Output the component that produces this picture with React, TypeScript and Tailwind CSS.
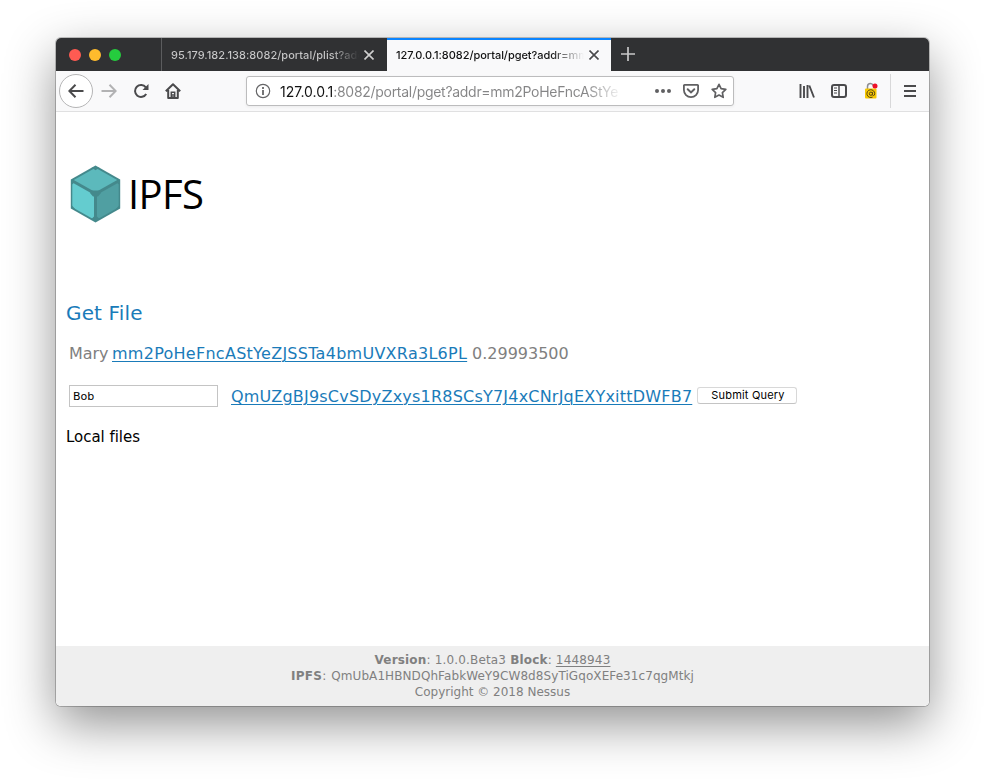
import type { ReactNode } from 'react';

function Icon({ children, className = '' }: { children: ReactNode; className?: string }) {
  return (
    <svg viewBox="0 0 16 16" className={`h-4 w-4 shrink-0 ${className}`} fill="none" stroke="#4a4a4c" strokeWidth="2">
      {children}
    </svg>
  );
}

function TabBar() {
  return (
    <div className="flex h-[33px] bg-[#303133] text-[11px] font-medium">
      <div className="flex w-[106px] items-center gap-2 border-r border-[#5b5c5e] pl-[13px]">
        <span className="h-3 w-3 rounded-full bg-[#ff5b52]" />
        <span className="h-3 w-3 rounded-full bg-[#ffbb2d]" />
        <span className="h-3 w-3 rounded-full bg-[#25cc3e]" />
      </div>
      <div className="flex w-[225px] items-center pt-px pl-[9px]">
        <div className="w-[188px] overflow-hidden whitespace-nowrap bg-gradient-to-r from-[#c8c8c9] from-85% to-transparent bg-clip-text leading-5 tracking-[0.03px] text-transparent">
          95.179.182.138:8082/portal/plist?addr
        </div>
        <svg viewBox="0 0 10 10" className="ml-[5px] h-[10px] w-[10px]" stroke="#cfcfcf" strokeWidth="1.6">
          <path d="M.5.5l9 9M9.500.5l-9 9" />
        </svg>
      </div>
      <div className="flex w-[224px] items-center border-t-2 border-[#0a84ff] bg-[#f9f9fa] pl-[9px]">
        <div className="-mt-[2px] w-[188px] overflow-hidden whitespace-nowrap bg-gradient-to-r from-[#111] from-82% to-transparent bg-clip-text leading-5 tracking-[-0.04px] text-transparent">
          127.0.0.1:8082/portal/pget?addr=mm2
        </div>
        <svg viewBox="0 0 10 10" className="-mt-px ml-[5px] h-[10px] w-[10px]" stroke="#4a4a4c" strokeWidth="1.6">
          <path d="M.5.5l9 9M9.500.5l-9 9" />
        </svg>
      </div>
      <svg viewBox="0 0 14 14" className="mt-[9px] ml-[10px] h-[14px] w-[14px]" stroke="#c8c8c9" strokeWidth="1.7">
        <path d="M7 0v14M0 7h14" />
      </svg>
    </div>
  );
}

function Toolbar() {
  return (
    <div className="flex h-[41px] items-center border-b border-[#e0e0e1] bg-[#f9f9fa]">
      <div className="ml-[3px] flex h-[34px] w-[34px] items-center justify-center rounded-full border border-[#b5b5b6] bg-white">
        <Icon>
          <path d="M15.500 8H1.500M7.500 1.800L1.300 8l6.200 6.200" />
        </Icon>
      </div>
      <Icon className="ml-2 opacity-40">
        <path d="M.5 8h14M8.500 1.800L14.700 8l-6.200 6.200" />
      </Icon>
      <Icon className="ml-4">
        <path d="M13.200 11A6 6 0 1 1 12.800 4.300" />
        <path d="M15.500 1v6h-6z" fill="#4a4a4c" stroke="none" />
      </Icon>
      <Icon className="ml-4">
        <path d="M.8 8.300L8 1.200l7.200 7.100M3.200 7v8h9.600V7" strokeLinejoin="round" />
        <path d="M6.300 15V9.200h3.400V15" strokeWidth="1.500" />
        <path d="M8 11v3" strokeWidth="1.500" />
      </Icon>
      <div className="ml-[65px] flex h-[30px] w-[488px] items-center rounded-[3px] border border-[#bcbcbd] bg-white pl-2 shadow-[0_1px_3px_rgba(0,0,0,0.06)]">
        <svg viewBox="0 0 16 16" className="h-4 w-4 shrink-0" fill="none" stroke="#666668">
          <circle cx="8" cy="8" r="6.700" strokeWidth="1.200" />
          <path d="M8 7v5M8 4v2" strokeWidth="1.800" />
        </svg>
        <div className="mt-[2px] ml-[9px] w-[344px] overflow-hidden whitespace-nowrap bg-[linear-gradient(to_right,#111_54px,#858586_54px,#858586_305px,transparent_343px)] bg-clip-text text-[14px] leading-5 text-transparent">
          127.0.0.1<span className="tracking-[-0.29px]">:8082/portal/pget?addr=mm2PoHeFncAStYe</span>
        </div>
        <svg viewBox="0 0 16 4" className="ml-[31px] h-1 w-4 shrink-0" fill="#606062">
          <circle cx="2" cy="2" r="2" />
          <circle cx="8" cy="2" r="2" />
          <circle cx="14" cy="2" r="2" />
        </svg>
        <Icon className="ml-3">
          <path d="M1.500 1.900h13a.6.6 0 0 1 .6.6v4.500a7.100 7.100 0 0 1-14.200 0V2.500a.6.6 0 0 1 .6-.6z" stroke="#606062" strokeWidth="1.800" />
          <path d="M4.700 6.200L8 9.400l3.300-3.200" stroke="#606062" strokeLinecap="round" />
        </Icon>
        <Icon className="ml-3">
          <path d="M8 1.300l2.100 4.300 4.700.7-3.400 3.300.8 4.700L8 12.100l-4.200 2.200.8-4.700L1.200 6.300l4.700-.7z" stroke="#606062" strokeWidth="1.700" strokeLinejoin="round" />
        </Icon>
      </div>
      <Icon className="ml-[65px]">
        <path d="M1.500 1v14M5 3v12M8.500 2v13M10.300 2.500l4.700 12" strokeWidth="1.900" />
      </Icon>
      <Icon className="ml-4">
        <rect x="1" y="2" width="14" height="12" rx="2" />
        <path d="M8 2v12" strokeWidth="1.500" />
        <path d="M3 5h3M3 7.500h3M3 10h3" strokeWidth="1" />
      </Icon>
      <svg viewBox="0 0 16 18" className="ml-4 h-[18px] w-4 shrink-0" fill="none">
        <path d="M4.500 8V4.500Q4.500 1.500 7.500 1.500Q9.500 1.500 10 3.500" stroke="#8d8d90" strokeWidth="1.500" />
        <rect x="2" y="6.500" width="11.500" height="10" rx="1" fill="#f7c800" />
        <path d="M9.600 15.100A3.900 3.900 0 1 1 11.700 11.700Q11.700 13.500 10.500 13.500Q9.500 13.500 9.500 12.500V10.200" stroke="#5b4810" strokeWidth="1" />
        <circle cx="7.900" cy="11.700" r="1.600" stroke="#5b4810" strokeWidth="1" />
        <circle cx="12" cy="4" r="2.500" fill="#ee1028" />
      </svg>
      <div className="ml-[11px] h-[34px] w-px bg-[#d8d8d9]" />
      <svg viewBox="0 0 12 12" className="ml-[13px] h-3 w-3" stroke="#4a4a4c" strokeWidth="2">
        <path d="M0 1h12M0 6h12M0 11h12" />
      </svg>
    </div>
  );
}

function Logo() {
  return (
    <div className="flex h-[58px] items-center">
      <svg viewBox="0 0 52 58" className="h-[58px] w-[52px]">
        <path d="M26.500.5L51.200 14.600v28.800L26.500 57.500 1.800 43.400V14.600z" fill="#44898c" />
        <path d="M26.500 2.800L48.200 15.100 26.500 27.200 4.800 15.100z" fill="#5cb9bc" />
        <path d="M3.300 17.600L25 29.700v24.700L3.300 42.200z" fill="#64cccf" />
        <path d="M49.700 17.600L28 29.700v24.700L49.700 42.200z" fill="#509fa2" />
        <path d="M22.500 2.600h8l-4 2.600zM23 25.500h7l2 2.500-3 3.500h-5L21 28zM2 39.500l5 5.500L2 43zM51 39.500l-5 5.500 5-2zM22.500 54l2.500-2.400h3l2.500 2.400-4 2.500zM2 15l4.500 1.500L3 19.500zM51 15l-4.500 1.500 3.500 3z" fill="#44898c" />
      </svg>
      <span className="ml-[7px] font-['Open_Sans',sans-serif] text-[40px] leading-[58px] tracking-[-0.6px] text-black">IPFS</span>
    </div>
  );
}

export default function App() {
  return (
    <div className="h-[780px] w-[985px] overflow-hidden bg-white pt-[38px] pl-[56px] font-[Inter,sans-serif]">
      <div className="h-[668px] w-[873px] rounded-[5px] shadow-[0_0_0_1px_rgba(0,0,0,0.22),0_18px_50px_rgba(0,0,0,0.43)]">
        <div className="flex h-full flex-col overflow-hidden rounded-[5px] bg-white">
          <TabBar />
          <Toolbar />
          <main className="flex-1 pt-[53px] pl-[10px] font-[Verdana,'DejaVu_Sans',sans-serif]">
            <div className="pl-[3px]">
              <Logo />
            </div>
            <h1 className="mt-[76px] text-[20px] leading-7 tracking-[0.15px] text-[#1a7bb9]">Get File</h1>
            <div className="mt-[15px] flex pl-[3px] text-[16px] leading-6 whitespace-nowrap text-[#808080]">
              <span className="w-[43px] tracking-[-0.1px]">Mary</span>
              <a className="w-[355px] tracking-[0.27px] text-[#1a7bb9] underline decoration-1 underline-offset-2">mm2PoHeFncAStYeZJSSTa4bmUVXRa3L6PL</a>
              <span className="ml-[5px]">0.29993500</span>
            </div>
            <div className="mt-[17px] flex items-center pl-[3px] whitespace-nowrap">
              <input className="h-[22px] w-[149px] border border-[#c4c4c4] bg-white px-[3px] text-[11px] text-black" defaultValue="Bob" />
              <a className="mt-[2px] ml-[13px] w-[461px] text-[16px] leading-6 tracking-[0.21px] text-[#1a7bb9] underline decoration-1 underline-offset-2">QmUZgBJ9sCvSDyZxys1R8SCsY7J4xCNrJqEXYxittDWFB7</a>
              <button className="-mt-px ml-[5px] h-[17px] w-[100px] rounded-[3px] border border-[#d8d8d8] border-b-[#c4c4c4] bg-white pl-[2px] font-[Inter,sans-serif] text-[11px] leading-[13px] tracking-[0.2px] text-black">Submit Query</button>
            </div>
            <p className="mt-[16px] text-[15px] leading-6 tracking-[-0.03px] text-black">Local files</p>
          </main>
          <footer className="h-[60px] bg-[#efefef] pt-[6px] text-center font-[Verdana,'DejaVu_Sans',sans-serif] text-[12px] leading-4 text-[#808080]">
            <p className="tracking-[0.17px]"><b>Version</b>: 1.0.0.Beta3 <b>Block</b>: <a className="underline decoration-1 underline-offset-2">1448943</a></p>
            <p><b className="tracking-[0.3px]">IPFS</b>:<span className="ml-[1px] tracking-[0.08px]"> QmUbA1HBNDQhFabkWeY9CW8d8SyTiGqoXEFe31c7qgMtkj</span></p>
            <p>Copyright © 2018 Nessus</p>
          </footer>
        </div>
      </div>
    </div>
  );
}
